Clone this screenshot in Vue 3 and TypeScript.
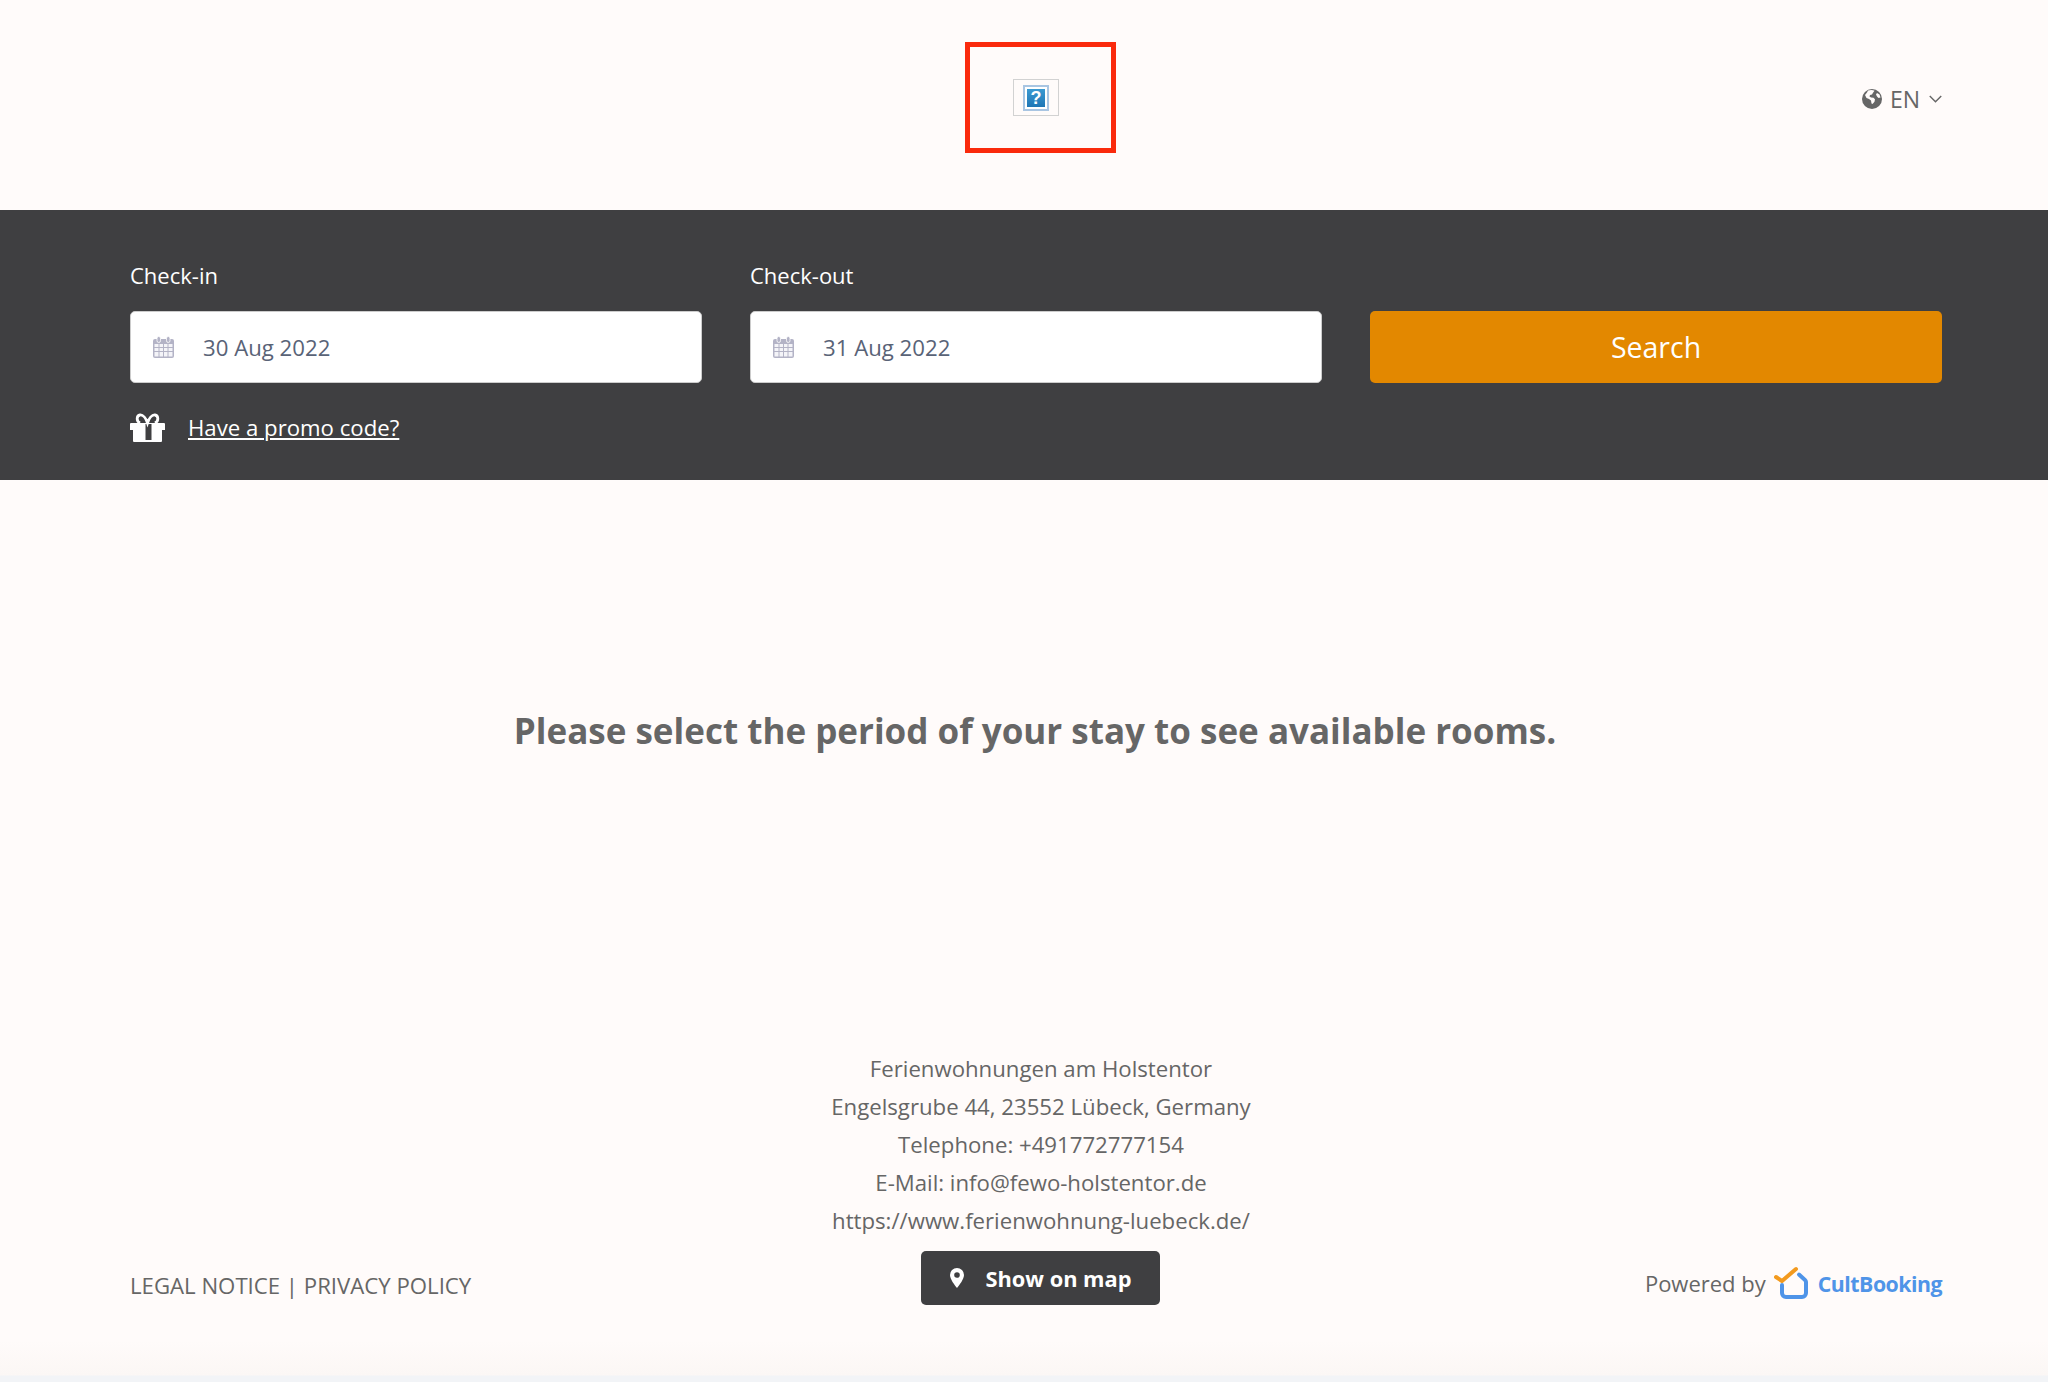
<script setup lang="ts">
import { ref } from 'vue'

const checkIn = ref('30 Aug 2022')
const checkOut = ref('31 Aug 2022')

const contactLines = [
  'Ferienwohnungen am Holstentor',
  'Engelsgrube 44, 23552 Lübeck, Germany',
  'Telephone: +491772777154',
  'E-Mail: info@fewo-holstentor.de',
  'https://www.ferienwohnung-luebeck.de/'
]
</script>

<template>
  <div class="page">
    <header class="top">
      <div class="logo-frame">
        <div class="broken-img">
          <span class="qmark">?</span>
        </div>
      </div>
      <div class="lang">
        <svg class="globe" viewBox="0 0 20 20">
          <circle cx="10" cy="10" r="10" fill="#666" />
          <path d="M6 1.500c2-.8 5-.8 6.500.2l-1.500 2-1 1.800-2 .5-.5 1.500 1.500 1 2.500.3 1.500 1.500-.5 2.500-2 2.200-1-.5-.5-3-2-1.500-2.500-1-1.500-3 2-2.500z" fill="#fffbfa" />
          <path d="M15 4l2.500 1.500 1 3-2 .5-1.500-1.500-1-2z" fill="#fffbfa" />
        </svg>
        <span>EN</span>
        <svg class="chev" viewBox="0 0 12 7">
          <path d="M.7 .7l5.300 5.300 5.300-5.300" fill="none" stroke="#666" stroke-width="1.300" />
        </svg>
      </div>
    </header>

    <section class="band">
      <div class="fields">
        <div class="field">
          <label>Check-in</label>
          <div class="input">
            <svg class="cal" viewBox="0 0 21 22">
              <path d="M2 3h17a2 2 0 0 1 2 2v15a2 2 0 0 1-2 2H2a2 2 0 0 1-2-2V5a2 2 0 0 1 2-2z" fill="#b3b3c6" />
              <path d="M1.500 8h4v3h-4zM6.500 8h3.500v3H6.500zM11 8h3.500v3H11zM15.500 8h4v3h-4zM1.500 12h4v3h-4zM6.500 12h3.500v3H6.500zM11 12h3.500v3H11zM15.500 12h4v3h-4zM1.500 16h4v4.500h-4zM6.500 16h3.500v4.500H6.500zM11 16h3.500v4.500H11zM15.500 16h4v4.500h-4z" fill="#f4f4f8" />
              <rect x="4" y="0.500" width="3.500" height="6" rx="1.700" fill="#b3b3c6" stroke="#fff" stroke-width="0.800" />
              <rect x="13.500" y="0.500" width="3.500" height="6" rx="1.700" fill="#b3b3c6" stroke="#fff" stroke-width="0.800" />
            </svg>
            <span>{{ checkIn }}</span>
          </div>
        </div>
        <div class="field">
          <label>Check-out</label>
          <div class="input">
            <svg class="cal" viewBox="0 0 21 22">
              <path d="M2 3h17a2 2 0 0 1 2 2v15a2 2 0 0 1-2 2H2a2 2 0 0 1-2-2V5a2 2 0 0 1 2-2z" fill="#b3b3c6" />
              <path d="M1.500 8h4v3h-4zM6.500 8h3.500v3H6.500zM11 8h3.500v3H11zM15.500 8h4v3h-4zM1.500 12h4v3h-4zM6.500 12h3.500v3H6.500zM11 12h3.500v3H11zM15.500 12h4v3h-4zM1.500 16h4v4.500h-4zM6.500 16h3.500v4.500H6.500zM11 16h3.500v4.500H11zM15.500 16h4v4.500h-4z" fill="#f4f4f8" />
              <rect x="4" y="0.500" width="3.500" height="6" rx="1.700" fill="#b3b3c6" stroke="#fff" stroke-width="0.800" />
              <rect x="13.500" y="0.500" width="3.500" height="6" rx="1.700" fill="#b3b3c6" stroke="#fff" stroke-width="0.800" />
            </svg>
            <span>{{ checkOut }}</span>
          </div>
        </div>
        <button class="search">Search</button>
      </div>
      <div class="promo">
        <svg class="gift" viewBox="0 0 35 29">
          <path d="M10 10C6 8 6.500 2.500 10 2c3-.4 6 3.500 7.500 8 1.500-4.500 4.500-8.400 7.500-8 3.500.5 4 6 0 8" fill="none" stroke="#fff" stroke-width="2.800" />
          <path fill-rule="evenodd" d="M1 10h33a1 1 0 0 1 1 1v6h-3v11a1 1 0 0 1-1 1H4a1 1 0 0 1-1-1V17H0v-6a1 1 0 0 1 1-1zm14.500 1v16h6V11z" fill="#fff" />
        </svg>
        <a class="promo-link">Have a promo code?</a>
      </div>
    </section>

    <main class="message">
      <h2>Please select the period of your stay to see available rooms.</h2>
    </main>

    <footer class="foot">
      <div class="legal">LEGAL NOTICE | PRIVACY POLICY</div>
      <div class="contact">
        <p v-for="line in contactLines" :key="line">{{ line }}</p>
        <button class="map-btn">
          <svg class="pin" viewBox="0 0 14 20">
            <path fill-rule="evenodd" d="M7 0a7 7 0 0 1 7 7c0 4-4.500 10-7 13C4.500 17 0 11 0 7a7 7 0 0 1 7-7zm0 4.200a2.800 2.800 0 1 0 0 5.600 2.800 2.800 0 0 0 0-5.600z" fill="#fff" />
          </svg>
          Show on map
        </button>
      </div>
      <div class="powered">
        <span>Powered by</span>
        <svg class="cb-logo" viewBox="3 5 35 34">
          <path d="M11 24v8a4 4 0 0 0 4 4h16a4 4 0 0 0 4-4V21a3 3 0 0 0-1-2l-6-5.500" fill="none" stroke="#4f94e8" stroke-width="4" stroke-linecap="round" />
          <path d="M5 16l6 4L25 8" fill="none" stroke="#f39a1e" stroke-width="4" stroke-linecap="round" stroke-linejoin="round" />
        </svg>
        <span class="cb-name">CultBooking</span>
      </div>
    </footer>
  </div>
</template>

<style scoped>
.page {
  height: 1382px;
  display: flex;
  flex-direction: column;
  background: linear-gradient(#fffbfa 1340px, #fbf7f5 1375px, #f2f4f7 1376px);
  font-family: "Open Sans", sans-serif;
  color: #666;
  overflow: hidden;
}
.top {
  height: 210px;
  position: relative;
  display: flex;
  align-items: center;
  justify-content: flex-end;
  padding: 0 106px 0 130px;
  box-sizing: border-box;
}
.logo-frame {
  position: absolute;
  left: 965px;
  top: 42px;
  width: 151px;
  height: 111px;
  box-sizing: border-box;
  border: 5px solid #fa2a0c;
  display: flex;
  align-items: center;
  justify-content: center;
}
.broken-img {
  width: 46px;
  height: 37px;
  box-sizing: border-box;
  border: 1px solid #d2d2d2;
  display: flex;
  align-items: center;
  justify-content: center;
  margin-left: -9px;
}
.qmark {
  width: 18px;
  height: 18px;
  background: linear-gradient(#3b9ad2, #1f76b5);
  border: 2px solid #fff;
  outline: 2px solid #a9c5e2;
  color: #fff;
  font: bold 18px/18px "Liberation Sans", sans-serif;
  text-align: center;
}
.lang {
  display: flex;
  align-items: center;
  font-size: 23px;
  margin-top: -13px;
}
.globe {
  width: 20px;
  height: 20px;
  margin-right: 8px;
}
.chev {
  width: 13px;
  height: 8px;
  margin-left: 9px;
}
.band {
  height: 270px;
  background: #3f3f41;
  padding: 50px 130px 0;
  box-sizing: border-box;
}
.fields {
  display: grid;
  grid-template-columns: repeat(3, 572px);
  gap: 48px;
  align-items: end;
}
.field label {
  display: block;
  color: #fff;
  font-size: 22px;
  line-height: 30px;
  margin-bottom: 21px;
}
.input {
  height: 72px;
  background: #fff;
  border: 1px solid #ccc;
  border-radius: 5px;
  box-sizing: border-box;
  display: flex;
  align-items: center;
  padding-left: 22px;
  font-size: 22.2px;
  color: #596377;
}
.cal {
  width: 21px;
  height: 22px;
  margin-right: 29px;
}
.search {
  height: 72px;
  background: #e38800;
  border: none;
  border-radius: 5px;
  color: #fff;
  font: 28.500px "Open Sans", sans-serif;
}
.promo {
  display: flex;
  align-items: center;
  margin-top: 29px;
}
.gift {
  width: 35px;
  height: 29px;
  margin-right: 23px;
}
.promo-link {
  color: #fff;
  font-size: 22.2px;
  text-decoration: underline;
}
.message {
  height: 570px;
  padding-top: 226px;
  box-sizing: border-box;
}
.message h2 {
  margin: 0 0 0 22px;
  text-align: center;
  font-size: 35px;
  line-height: 50px;
  font-weight: 700;
  color: #666;
}
.foot {
  flex: 1;
  display: grid;
  grid-template-columns: 1fr auto 1fr;
  padding: 0 106px 0 130px;
  align-items: start;
  font-size: 22.2px;
}
.contact {
  text-align: center;
  display: flex;
  flex-direction: column;
  align-items: center;
  margin-left: 10px;
}
.contact p {
  margin: 0;
  line-height: 38px;
}
.map-btn {
  margin-top: 11px;
  width: 239px;
  height: 54px;
  background: #3f3f41;
  color: #fff;
  border: none;
  border-radius: 5px;
  font: 700 21.8px "Open Sans", sans-serif;
  display: flex;
  align-items: center;
  justify-content: center;
  gap: 21px;
}
.pin {
  width: 14px;
  height: 20px;
}
.legal {
  align-self: end;
  margin-bottom: 81px;
}
.powered {
  justify-self: end;
  align-self: end;
  margin-bottom: 82px;
  display: flex;
  align-items: center;
  font-size: 22px;
}
.cb-logo {
  width: 35px;
  height: 34px;
  margin: 0 9px 0 8px;
}
.cb-name {
  color: #4f94e8;
  font-weight: 700;
  font-size: 21.3px;
  letter-spacing: -0.5px;
}
</style>
